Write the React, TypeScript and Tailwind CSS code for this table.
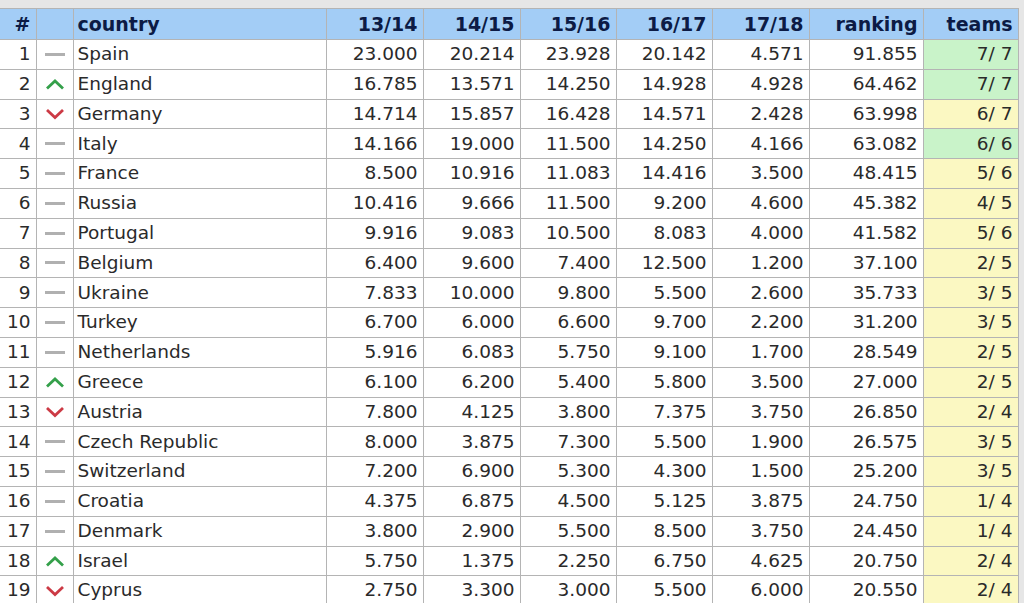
import React from 'react'

type Trend = 'same' | 'up' | 'down'

interface Row {
  rank: number
  trend: Trend
  country: string
  seasons: string[]
  ranking: string
  teams: string
  full: boolean
}

const rows: Row[] = [
  { rank: 1, trend: 'same', country: 'Spain', seasons: ['23.000', '20.214', '23.928', '20.142', '4.571'], ranking: '91.855', teams: '7/ 7', full: true },
  { rank: 2, trend: 'up', country: 'England', seasons: ['16.785', '13.571', '14.250', '14.928', '4.928'], ranking: '64.462', teams: '7/ 7', full: true },
  { rank: 3, trend: 'down', country: 'Germany', seasons: ['14.714', '15.857', '16.428', '14.571', '2.428'], ranking: '63.998', teams: '6/ 7', full: false },
  { rank: 4, trend: 'same', country: 'Italy', seasons: ['14.166', '19.000', '11.500', '14.250', '4.166'], ranking: '63.082', teams: '6/ 6', full: true },
  { rank: 5, trend: 'same', country: 'France', seasons: ['8.500', '10.916', '11.083', '14.416', '3.500'], ranking: '48.415', teams: '5/ 6', full: false },
  { rank: 6, trend: 'same', country: 'Russia', seasons: ['10.416', '9.666', '11.500', '9.200', '4.600'], ranking: '45.382', teams: '4/ 5', full: false },
  { rank: 7, trend: 'same', country: 'Portugal', seasons: ['9.916', '9.083', '10.500', '8.083', '4.000'], ranking: '41.582', teams: '5/ 6', full: false },
  { rank: 8, trend: 'same', country: 'Belgium', seasons: ['6.400', '9.600', '7.400', '12.500', '1.200'], ranking: '37.100', teams: '2/ 5', full: false },
  { rank: 9, trend: 'same', country: 'Ukraine', seasons: ['7.833', '10.000', '9.800', '5.500', '2.600'], ranking: '35.733', teams: '3/ 5', full: false },
  { rank: 10, trend: 'same', country: 'Turkey', seasons: ['6.700', '6.000', '6.600', '9.700', '2.200'], ranking: '31.200', teams: '3/ 5', full: false },
  { rank: 11, trend: 'same', country: 'Netherlands', seasons: ['5.916', '6.083', '5.750', '9.100', '1.700'], ranking: '28.549', teams: '2/ 5', full: false },
  { rank: 12, trend: 'up', country: 'Greece', seasons: ['6.100', '6.200', '5.400', '5.800', '3.500'], ranking: '27.000', teams: '2/ 5', full: false },
  { rank: 13, trend: 'down', country: 'Austria', seasons: ['7.800', '4.125', '3.800', '7.375', '3.750'], ranking: '26.850', teams: '2/ 4', full: false },
  { rank: 14, trend: 'same', country: 'Czech Republic', seasons: ['8.000', '3.875', '7.300', '5.500', '1.900'], ranking: '26.575', teams: '3/ 5', full: false },
  { rank: 15, trend: 'same', country: 'Switzerland', seasons: ['7.200', '6.900', '5.300', '4.300', '1.500'], ranking: '25.200', teams: '3/ 5', full: false },
  { rank: 16, trend: 'same', country: 'Croatia', seasons: ['4.375', '6.875', '4.500', '5.125', '3.875'], ranking: '24.750', teams: '1/ 4', full: false },
  { rank: 17, trend: 'same', country: 'Denmark', seasons: ['3.800', '2.900', '5.500', '8.500', '3.750'], ranking: '24.450', teams: '1/ 4', full: false },
  { rank: 18, trend: 'up', country: 'Israel', seasons: ['5.750', '1.375', '2.250', '6.750', '4.625'], ranking: '20.750', teams: '2/ 4', full: false },
  { rank: 19, trend: 'down', country: 'Cyprus', seasons: ['2.750', '3.300', '3.000', '5.500', '6.000'], ranking: '20.550', teams: '2/ 4', full: false },
]

const seasonLabels = ['13/14', '14/15', '15/16', '16/17', '17/18']

const TrendIcon = ({ trend }: { trend: Trend }) => {
  if (trend === 'up') {
    return (
      <svg width="20" height="12" viewBox="0 0 20 12" className="mx-auto block">
        <path d="M2 10.5 L10 3 L18 10.5" fill="none" stroke="#34a04a" strokeWidth="2.8" />
      </svg>
    )
  }
  if (trend === 'down') {
    return (
      <svg width="20" height="12" viewBox="0 0 20 12" className="mx-auto block">
        <path d="M2 2 L10 9.5 L18 2" fill="none" stroke="#cc3a45" strokeWidth="2.8" />
      </svg>
    )
  }
  return <div className="mx-auto h-[3px] w-[20px] bg-[#b0b0b0]" />
}

const cell = 'border border-[#b4b4b4] h-[29.8px] px-[5px] text-right'

export default function App() {
  return (
    <div className="min-h-screen w-full bg-[#e6e6e6] pt-[8px] font-['DejaVu_Sans',Verdana,sans-serif] text-[18.5px] leading-none text-[#2a2a2a]">
      <table className="w-[1018px] table-fixed border-collapse bg-white">
        <colgroup>
          <col className="w-[36px]" />
          <col className="w-[37px]" />
          <col className="w-[253px]" />
          <col className="w-[97px]" />
          <col className="w-[97px]" />
          <col className="w-[96px]" />
          <col className="w-[96px]" />
          <col className="w-[97px]" />
          <col className="w-[114px]" />
          <col className="w-[95px]" />
        </colgroup>
        <thead>
          <tr className="bg-[#a3cdf6] text-[19px] font-bold text-[#0c1b45]">
            <th className="h-[31px] border border-[#b4b4b4] border-l-0 px-[5px] text-right">#</th>
            <th className="border border-[#b4b4b4]" />
            <th className="border border-[#b4b4b4] px-[4px] text-left">country</th>
            {seasonLabels.map((s) => (
              <th key={s} className="border border-[#b4b4b4] px-[5px] text-right">{s}</th>
            ))}
            <th className="border border-[#b4b4b4] px-[5px] text-right">ranking</th>
            <th className="border border-[#b4b4b4] px-[5px] text-right">teams</th>
          </tr>
        </thead>
        <tbody>
          {rows.map((r) => (
            <tr key={r.rank}>
              <td className={`${cell} border-l-0`}>{r.rank}</td>
              <td className="border border-[#b4b4b4]">
                <TrendIcon trend={r.trend} />
              </td>
              <td className="border border-[#b4b4b4] px-[4px] text-left">{r.country}</td>
              {r.seasons.map((v, i) => (
                <td key={i} className={cell}>{v}</td>
              ))}
              <td className={cell}>{r.ranking}</td>
              <td className={`${cell} ${r.full ? 'bg-[#c9f3c9]' : 'bg-[#fbf8c2]'}`}>{r.teams}</td>
            </tr>
          ))}
        </tbody>
      </table>
    </div>
  )
}
